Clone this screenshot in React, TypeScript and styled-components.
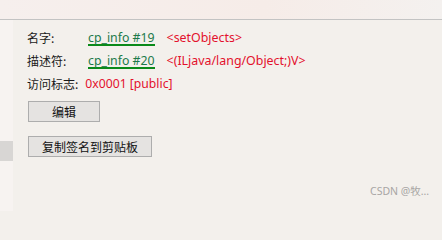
import React from "react";
import styled, { createGlobalStyle } from "styled-components";

const Global = createGlobalStyle`
  html, body { margin: 0; padding: 0; background: #f3f0ec; }
  body { font-family: "Noto Sans", "Noto Sans CJK SC", sans-serif; }
`;

const Page = styled.div`
  position: relative;
  width: 442px;
  height: 211px;
  overflow: hidden;
  background: #f3f0ec;
  display: flex;
  flex-direction: column;
`;

const TopStrip = styled.div`
  height: 19px;
  background: linear-gradient(90deg, #f6efed 0%, #f6ece8 60%, #f4f1ef 100%);
  border-bottom: 1px solid #c3c3c3;
  flex: none;
`;

const Body = styled.div`
  flex: 1;
  display: flex;
`;

const Side = styled.div`
  width: 13px;
  flex: none;
  background: #f7f3f1;
  display: flex;
  flex-direction: column;
  padding-top: 121px;
`;

const SideBlock = styled.div`
  height: 20px;
  background: #d8d6d4;
`;

const Main = styled.div`
  flex: 1;
  padding: 6px 0 0 14px;
  display: flex;
  flex-direction: column;
  font-size: 12px;
  color: #1a1a1a;
`;

const Row = styled.div`
  height: 23px;
  display: flex;
  align-items: center;
  white-space: nowrap;
`;

const Label = styled.span<{ $w?: number }>`
  font-family: "Noto Sans CJK SC", sans-serif;
  ${(p) => (p.$w ? `width: ${p.$w}px;` : "margin-right: 7px;")}
  flex: none;
`;

const Link = styled.span`
  display: inline-block;
  font-size: 12.3px;
  line-height: 13px;
  color: #1c7a4a;
  border-bottom: 2px solid #0a8a1a;
  padding-top: 1px;
`;

const Red = styled.span<{ $ml?: number }>`
  color: #e3102c;
  font-size: 12.4px;
  margin-left: ${(p) => p.$ml ?? 0}px;
`;

const Value = styled.span`
  color: #e3102c;
  font-size: 12.2px;
`;

const Btn = styled.button<{ $w: number; $mt: number }>`
  width: ${(p) => p.$w}px;
  height: 21px;
  margin-top: ${(p) => p.$mt}px;
  margin-left: 1px;
  padding: 0;
  background: #e5e3e1;
  border: 1px solid #adadad;
  border-radius: 0;
  font-family: "Noto Sans CJK SC", sans-serif;
  font-size: 12px;
  color: #111;
  display: flex;
  align-items: center;
  justify-content: center;
`;

const Watermark = styled.div`
  position: absolute;
  left: 370px;
  top: 183px;
  font-family: "Noto Sans", "Noto Sans CJK SC", sans-serif;
  font-size: 10.5px;
  color: #a8a6a4;
`;

export default function App() {
  return (
    <Page>
      <Global />
      <TopStrip />
      <Body>
        <Side>
          <SideBlock />
        </Side>
        <Main>
          <Row>
            <Label $w={61}>名字:</Label>
            <Link>cp_info #19</Link>
            <Red $ml={12}>&lt;setObjects&gt;</Red>
          </Row>
          <Row>
            <Label $w={61}>描述符:</Label>
            <Link>cp_info #20</Link>
            <Red $ml={12}>&lt;(ILjava/lang/Object;)V&gt;</Red>
          </Row>
          <Row>
            <Label>访问标志:</Label>
            <Value>0x0001 [public]</Value>
          </Row>
          <Btn $w={72} $mt={6}>编辑</Btn>
          <Btn $w={124} $mt={14}>复制签名到剪贴板</Btn>
        </Main>
      </Body>
      <Watermark>CSDN @牧...</Watermark>
    </Page>
  );
}
